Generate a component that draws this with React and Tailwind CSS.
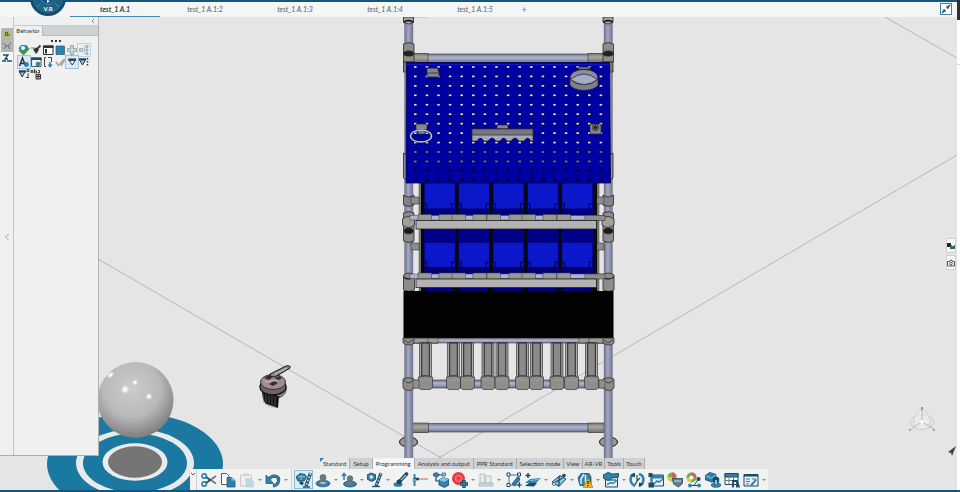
import { ChevronLeft } from 'lucide-react';

const documents = ['test_1 A.1', 'test_1 A.1:2', 'test_1 A.1:3', 'test_1 A.1:4', 'test_1 A.1:5'];

const sections = [
  { name: 'Standard' },
  { name: 'Setup' },
  { name: 'Programming' },
  { name: 'Analysis and output' },
  { name: 'PPR Standard' },
  { name: 'Selection mode' },
  { name: 'View', tight: true },
  { name: 'AR-VR', tight: true },
  { name: 'Tools', tight: true },
  { name: 'Touch', tight: true },
];

const N = '#1b4a66';
const B = '#2f82ab';
const L = '#8fc4de';
const G = '#6f7a80';

const glyphs = {
  cut: (
    <g fill="none">
      <path d="M5 5 15 11.500M5 11 15 4" stroke={G} strokeWidth="1.800" />
      <circle cx="3.200" cy="4" r="2.200" stroke={B} strokeWidth="1.700" />
      <circle cx="3.200" cy="12" r="2.200" stroke={B} strokeWidth="1.700" />
      <path d="M5 5 9 8 5 11" stroke={N} strokeWidth="1.500" />
    </g>
  ),
  copy: (
    <g>
      <path d="M1.500 1.500h5l2.500 2.500v8.500h-7.500z" fill="#fff" stroke="#555d62" />
      <path d="M7 5.500h4.500l3.500 3v6.500H7z" fill={B} stroke={N} strokeWidth=".7" />
      <path d="M11.500 5.500v3h3.500z" fill={L} />
    </g>
  ),
  paste: (
    <g opacity=".55">
      <path d="M1.500 3h11v11h-11z" fill="#eee" stroke="#aaa" />
      <path d="M4 1.500h6v2.500H4z" fill="#bbb" />
      <path d="M7 6.500h4.500l3 2.500v6H7z" fill={L} stroke="#9ab" strokeWidth=".5" />
    </g>
  ),
  undo: (
    <g>
      <path d="M4 7C8 2 14.500 4 13.500 9 13 11.500 11 13.500 8 14" fill="none" stroke={N} strokeWidth="3.200" />
      <path d="M1 3v8.500h7.500z" fill={B} stroke={N} strokeWidth=".7" />
      <path d="M4 7C8 2 14.500 4 13.500 9 13 11.500 11 13.500 8 14" fill="none" stroke={B} strokeWidth="2.200" />
    </g>
  ),
  robotArm: (
    <g>
      <path d="M0 5 4 1.500 9 2.500 10.500 5 8 9 2 9z" fill={B} stroke={N} strokeWidth=".9" />
      <path d="M2 5 5 4 9 5M5 4v4" stroke={L} fill="none" />
      <path d="m5 9 3 2-2 2.500-3-2.500z" fill={N} />
      <path d="M14.500 1 10 14" stroke={N} strokeWidth="3.400" />
      <path d="M14.500 1 10 14" stroke="#c9d3d8" strokeWidth="1.600" strokeDasharray="2 1.500" />
      <path d="M7 15h7" stroke={N} strokeWidth="1.500" />
    </g>
  ),
  device: (
    <g>
      <ellipse cx="8" cy="11.500" rx="7" ry="3.300" fill={B} stroke={N} strokeWidth=".7" />
      <path d="M5 8v3c1 1.500 5 1.500 6 0V8z" fill={G} />
      <circle cx="8" cy="5.500" r="3" fill={G} stroke="#4d565b" strokeWidth=".6" />
      <ellipse cx="8" cy="11" rx="3" ry="1" fill="#b9c3c8" />
    </g>
  ),
  deviceUp: (
    <g>
      <ellipse cx="9" cy="12" rx="6.500" ry="3" fill={B} stroke={N} strokeWidth=".7" />
      <path d="M6.500 8v3.500c1 1.300 4 1.300 5 0V8z" fill={G} />
      <circle cx="9" cy="6.500" r="2.800" fill={G} stroke="#4d565b" strokeWidth=".6" />
      <path d="M3 8V2M1 4l2-2.500L5 4" stroke={B} fill="none" strokeWidth="1.500" />
    </g>
  ),
  armGear: (
    <g>
      <path d="m0 3 4-2 4.500 1.500V7.500L4.500 9.500 0 7z" fill={B} stroke={N} strokeWidth=".9" />
      <circle cx="4.300" cy="5" r="1.700" fill="#dfeef5" />
      <path d="M14 1 9 14" stroke={N} strokeWidth="3.200" />
      <path d="M14 1 9 14" stroke={L} strokeWidth="1.500" strokeDasharray="2 1.500" />
      <path d="M5 14.500h8" stroke={N} strokeWidth="1.300" />
    </g>
  ),
  brush: (
    <g>
      <path d="M13.500 2 7 9" stroke={N} strokeWidth="3.600" strokeLinecap="round" />
      <path d="M13 3 8 8" stroke={L} strokeWidth="1.200" />
      <ellipse cx="5" cy="12.500" rx="4.500" ry="2.300" fill={B} />
      <circle cx="6" cy="10" r="2.500" fill={N} />
    </g>
  ),
  axis: (
    <g fill="none">
      <path d="M2.500 2v12" stroke={B} strokeWidth="2" />
      <path d="M2 7h5" stroke={N} strokeWidth="2.500" />
      <path d="M7 7h9" stroke="#d0585a" strokeWidth="1" />
      <circle cx="2.500" cy="8" r="1.600" fill={L} stroke={N} strokeWidth=".5" />
    </g>
  ),
  boxes: (
    <g>
      <path d="m0 2 3.500-1.500 3 2-2 2.500-4-1z" fill={B} stroke={N} strokeWidth=".7" />
      <path d="M3 5v4h4M6 3h4" stroke={N} fill="none" strokeWidth="1.200" />
      <path d="m6 8 4-2.500 6 2V13l-4.500 2.500L6 13z" fill={B} stroke={N} strokeWidth=".8" />
      <path d="m6 8 5 2 4.500-2.500-5.500-2z" fill={L} />
      <path d="M9 1h3.500v3H9z" fill={L} stroke={N} strokeWidth=".6" />
    </g>
  ),
  record: (
    <g>
      <circle cx="6.500" cy="6.500" r="6.500" fill="#e23f45" />
      <circle cx="6.500" cy="6.500" r="3" fill="none" stroke="#f59a9b" />
      <path d="M8 12h8M12 8v8" stroke={N} strokeWidth="3.400" />
      <path d="M8.500 12h7M12 8.500v7" stroke={B} strokeWidth="1.500" />
    </g>
  ),
  stamp: (
    <g opacity=".5" fill="#dde3e6" stroke={G} strokeWidth=".8">
      <path d="M2 2h5v9H2zM7 4h6v7H7z" />
      <path d="M1 11h14v3H1z" fill={L} />
    </g>
  ),
  frame: (
    <g>
      <path d="M3 3h10v10H3z" fill="none" stroke={B} />
      <path d="M1 1h3v3H1zM11.500 1h3v3h-3zM1 11.500h3v3H1z" fill="#fff" stroke={N} />
      <path d="m6 12 5.500-7 2.500 2-5.500 7z" fill={B} stroke={N} strokeWidth=".8" />
      <path d="M11 13h5M13.500 10.500v5" stroke={N} strokeWidth="1.200" />
    </g>
  ),
  planes: (
    <g>
      <path d="M3 1v5M.5 3.500h5" stroke={N} strokeWidth="1.500" />
      <path d="m0 11 5-4 11-1-5 5z" fill={B} />
      <path d="m0 14 4-3h8l-3 3.500z" fill={N} />
      <path d="m5 8.500 9-1" stroke={L} />
    </g>
  ),
  path: (
    <g>
      <path d="m1 10 8-6.500 6 3.500-7 7.500z" fill={L} stroke={N} />
      <path d="m4.500 10 7-4M8 4v10" stroke={N} fill="none" strokeWidth="1.300" />
      <circle cx="13" cy="3.500" r="1.800" fill={N} />
      <circle cx="3" cy="12" r="1.500" fill="#fff" stroke={N} strokeWidth=".8" />
    </g>
  ),
  warning: (
    <g>
      <path d="M4 1.500h8l2 3.500v8.500H3L1 6z" fill={B} stroke={N} strokeWidth=".8" />
      <path d="M7 2 4 7v5M8.500 3v9" stroke="#e3f1f7" strokeWidth="1.500" fill="none" />
      <path d="m11 6 5 9.500H6z" fill="#f5b21e" stroke="#a97208" strokeWidth=".6" />
      <path d="M11 9v3M11 13v1.300" stroke="#3a2a00" strokeWidth="1.300" />
    </g>
  ),
  program: (
    <g>
      <path d="M2.500 5.500h12v9.500h-12z" fill="#e5eff4" stroke={N} />
      <path d="M4 8h9M4 12.500l4-2 2 1 4-3" stroke={B} fill="none" strokeWidth="1.400" />
      <path d="m0 3 5-2.500L9.500 2l6-.5v3.500L9.500 6 5 8.500 0 6z" fill={B} stroke={N} strokeWidth=".9" />
    </g>
  ),
  clock: (
    <g fill="none">
      <path d="M6 2C2 3 1 6 2 10c1 2 2 3 4 4M10 2c4 1 5 4 4 8-1 2-2 3-4 4" stroke={B} strokeWidth="2.600" />
      <path d="M8 3v6l-2 4M8 9l3-3" stroke={N} strokeWidth="1.200" />
      <path d="m1 3 5-2v4.500zM15 12l-5 3v-4.500z" fill={N} />
    </g>
  ),
  tasks: (
    <g>
      <path d="M4 3h11.500v11H4z" fill="#e5eff4" stroke={N} />
      <path d="M4 3h11.500v3.500H4z" fill={B} />
      <path d="M.5 1h4v4h-4zM.5 10.500H6v5H.5z" fill={N} />
      <path d="M3 5v5M6 12l3-3 2 1 4-3" stroke={B} fill="none" strokeWidth="1.500" />
    </g>
  ),
  shield: (
    <g>
      <circle cx="5" cy="5" r="4.500" fill="#69b54a" />
      <path d="M5 5V.5A4.500 4.500 0 0 1 9.500 5z" fill="#e2574c" />
      <path d="M.5 5H5v4.500A4.500 4.500 0 0 1 .5 5z" fill="#f0c33c" />
      <path d="M5.500 6.500h10v5l-4 3.500-5-3z" fill={G} stroke={N} strokeWidth=".8" />
      <path d="M7 9h7" stroke={L} strokeWidth="1.500" />
    </g>
  ),
  branch: (
    <g>
      <circle cx="5.500" cy="5.500" r="5" fill="#69b54a" />
      <path d="M5.500 5.500V.5a5 5 0 0 1 5 5z" fill="#e2574c" />
      <path d="M.5 5.500h5v5a5 5 0 0 1-5-5z" fill="#f0c33c" />
      <circle cx="5.500" cy="5.500" r="2" fill="#fff" />
      <path d="M4 13.500h4l4-6M8 13.500h5" stroke={N} fill="none" />
      <circle cx="4" cy="13.500" r="2" fill={B} />
      <circle cx="12.500" cy="7" r="2" fill={N} />
      <circle cx="13" cy="13.500" r="2" fill={B} />
    </g>
  ),
  simulate: (
    <g>
      <path d="m0 4 4.500-3.500L11 2.500v5L6.500 10 0 7.500z" fill={B} stroke={N} strokeWidth=".9" />
      <path d="m1 4 5.500 2L11 3" stroke={L} fill="none" />
      <circle cx="11" cy="8" r="3.300" fill={N} />
      <ellipse cx="11" cy="13" rx="4.800" ry="2.300" fill={B} stroke={N} strokeWidth=".6" />
      <path d="M10 8h2v4h-2z" fill={L} />
    </g>
  ),
  table: (
    <g>
      <path d="M1 1.500h13v11H1z" fill="#fff" stroke={N} />
      <path d="M1 1.500h13v3.500H1z" fill={B} stroke={N} />
      <path d="M1 8.500h13M5 4v8.500M9.500 4v8.500" stroke={G} />
      <path d="M9 15.500V9h4v6.500M13 10l2.500 5.500" stroke={N} strokeWidth="1.800" fill="none" />
    </g>
  ),
  report: (
    <g>
      <path d="M1 2.500h14v11.500H1z" fill="#e8f0f4" stroke={N} />
      <path d="M1 2.500h14v2H1z" fill={N} />
      <path d="M3 7h4M3 9.500h4M3 12h3M9 7h4" stroke={B} />
      <path d="m7 13 5.500-6 1.500 1-5 6z" fill={B} />
    </g>
  ),
};

const toolGroups = [
  [
    { id: 'cut', label: 'Cut' },
    { id: 'copy', label: 'Copy' },
    { id: 'paste', label: 'Paste', menu: true },
    { id: 'undo', label: 'Undo', menu: true },
  ],
  [
    { id: 'robotArm', label: 'Robot', selected: true },
    { id: 'device', label: 'Device', menu: true },
    { id: 'deviceUp', label: 'Mount', menu: true },
    { id: 'armGear', label: 'Mechanism', menu: true },
    { id: 'brush', label: 'Jog' },
    { id: 'axis', label: 'Axis' },
  ],
  [
    { id: 'boxes', label: 'Assembly' },
    { id: 'record', label: 'Record', menu: true },
    { id: 'stamp', label: 'Stamp', menu: true },
  ],
  [
    { id: 'frame', label: 'Frame' },
    { id: 'planes', label: 'Planes', menu: true },
    { id: 'path', label: 'Path', menu: true },
    { id: 'warning', label: 'Check', menu: true },
    { id: 'program', label: 'Program', menu: true },
    { id: 'clock', label: 'Cycle time' },
    { id: 'tasks', label: 'Tasks' },
    { id: 'shield', label: 'Safety' },
    { id: 'branch', label: 'Branch' },
    { id: 'simulate', label: 'Simulate' },
    { id: 'table', label: 'Table' },
    { id: 'report', label: 'Report', menu: true },
  ],
];

// Icons of the Behavior panel, on a 12 unit grid
const behaviorTools = [
  { label: 'Validate', art: <g><path d="m.5 4 3-3 5 0 2 3-4 6-5-4z" fill={B} /><circle cx="5" cy="4" r="2" fill="#fff" /><path d="M1.500 6 5.500 10 11 4" fill="none" stroke="#3f9e2f" strokeWidth="2.200" /></g> },
  { label: 'Clean', art: <g><path d="M10.500 1.500 7 5" stroke="#444" strokeWidth="2.200" /><path d="m3 5 4-1.500L9 6 6 10z" fill="#333" /><path d="M1 4h4" stroke={G} /></g> },
  { label: 'Window', art: <g><path d="M1.500 2h9.500v8.500h-9.500z" fill="#fff" stroke="#333" /><path d="M1 1.500h10.500V4H1z" fill="#333" /><path d="M3 5h2v4.500H3z" fill="#333" /></g> },
  { label: 'Fill', art: <path d="M2 2h8.500v8.500H2z" fill={B} stroke={N} strokeWidth=".6" /> },
  { label: 'Add', art: <path d="M4.500 1.500h3v3h3v3h-3v3h-3v-3h-3v-3h3z" fill="#c4d2da" stroke="#8c9ca6" strokeWidth=".8" /> },
  { label: 'Tree', framed: true, art: <g stroke="#8ba4b3" fill="#c8d8e1" strokeWidth=".8"><path d="M1.500 4.500h3v3h-3zM8 1.500h2v2H8zM8 5h2v2H8zM8 8.500h2v2H8z" /><path d="M4.500 6H8M6.500 2.500v7M6.500 2.500H8M6.500 9.500H8" fill="none" strokeDasharray="1 .6" /></g> },
  { label: 'Text', selected: true, art: <g fill="none"><path d="m1.500 10 3-8 3 8M2.500 7.500h4" stroke="#333" strokeWidth="1.500" /><circle cx="8.500" cy="8.500" r="2.400" fill={B} /></g> },
  { label: 'Dialog', art: <g><path d="M1.500 2h9.500v8.500h-9.500z" fill="#e9eff2" stroke="#4c5a62" /><path d="M1 1.500h10.500V4H1z" fill={N} /><circle cx="8" cy="8" r="2.300" fill={B} /></g> },
  { label: 'Bracket', art: <g fill="none" stroke="#444"><path d="M4 1.500H2.500v9H4M6 1.500h3.500V6" /><path d="M8 6v4M6.500 8.500 8 10.500l2-2" stroke={B} strokeWidth="1.500" /></g> },
  { label: 'Apply', art: <g stroke="#a4a9ac" fill="none" strokeWidth="1.600"><path d="m2 6 2.500 3.500L10.500 3" /><path d="m6 7 1.500 2 3-5" /></g> },
  { label: 'Filter', selected: true, art: <g><path d="M2.500 3h7.500L6.200 9z" fill="#fff" stroke="#333" /><path d="M2.500 3H10v2H2.500z" fill={N} /></g> },
  { label: 'Filter list', art: <g><path d="M1 3h7L4.500 9z" fill={L} stroke="#333" /><path d="M1 2.500h7v2H1z" fill={N} /><path d="M9.500 2v8" stroke="#333" strokeWidth="1.500" strokeDasharray="1.500 1.500" /></g> },
  { label: 'Filter order', art: <g><path d="M1 3h6.500L4.200 9z" fill={L} stroke="#333" /><path d="M1 2.500h7v2H1z" fill={N} /><path d="M9 1.500h2v2H9zM10 5v5M8 9.500h3" fill="none" stroke="#333" strokeWidth=".9" /></g> },
  { label: 'Labels', art: <g stroke="#333" fill="none"><path d="M1 5V2.500h2V5M1 4h2M4.500 1v4h2V3h-2M9.500 5V2.500H8M9.500 5H8V4" strokeWidth=".9" /><path d="M6 6.500h4.500v4.500H6zM6 8.500h4.500M8.200 6.500V11" fill="#ccc" /></g> },
];

const holes = [];
for (let r = 0; r < 13; r++) {
  for (let c = 0; c < 17; c++) holes.push({ x: 415 + c * 11.6, y: 66.5 + r * 9.45, dim: r > 10, mid: r > 8 });
}
const bins = [0, 1, 2, 3, 4].map((i) => 421.7 + i * 34.4);
const rollers = [418, 439, 452, 473, 487, 509, 522, 543, 557];
const uprights = [418.5, 446.5, 460.5, 481, 495, 515.5, 529.5, 550, 564.5, 584.5];

function Post({ x }) {
  return (
    <g stroke="#26272b" strokeWidth=".8">
      <rect x={x} y="17" width="8.500" height="450" fill="url(#tubeV)" stroke="#777a86" strokeWidth=".4" />
      <path d={`M${x - 1} 17h10v5q-5 4-10 0z`} fill="#a3a29e" />
      <path d={`M${x - 1} 22.500q5-4 10 0`} fill="none" stroke="#111" strokeWidth="1.500" />
      <path d={`M${x - 1} 44q5-3 10.500 0v18h-10.500z`} fill="#8d8c88" />
      <ellipse cx={x + 4.2} cy="53.500" rx="5" ry="2.600" fill="#24231f" />
      <path d={`M${x - 1} 62h10v10h-10z`} fill="#777672" />
      <path d={`M${x - 1} 153q5 4 10 0v25q-5 4-10 0z`} fill="#8d8c90" />
      <path d={`M${x - 1} 195q5 4 10.500 0v10q-5 3-10.500 0z`} fill="#84838a" />
      <path d={`M${x - 1} 213q5-3 10.500 0v28q-5 3-10.500 0z`} fill="#8d8c88" />
      <path d={`M${x - 2} 219q6-5 12 0v6q-6 5-12 0z`} fill="#a09f9b" />
      <ellipse cx={x + 4.2} cy="231" rx="4.600" ry="2.800" fill="#1b1a18" />
      <path d={`M${x - 1} 275q5-4 11 0v15q-5 3-11 0z`} fill="#8d8c88" />
      <path d={`M${x - 1} 277q5 4 11 0`} fill="none" strokeWidth="1.500" />
    </g>
  );
}

function Shelf({ y, railY }) {
  return (
    <g>
      {bins.map((x) => (
        <g key={x}>
          <rect x={x} y={y} width="34.400" height={railY - y} fill="#00007c" />
          <rect x={x + 3} y={y} width="30" height={railY - y - 12} fill="#0b17ca" />
          <path d={`M${x + 3} ${railY - 17}h2v6h25v-6h3`} fill="none" stroke="#000034" strokeWidth="1" />
          <rect x={x - 0.6} y={y} width="3" height={railY - y} fill="#07070f" />
        </g>
      ))}
      <rect x="594" y={y} width="3" height={railY - y} fill="#0a0a10" />
      <rect x="410" y={railY - 5} width="194" height="4.500" fill="#aeb3cf" stroke="#44454b" strokeWidth=".5" />
      {rollers.map((x) => (
        <rect key={x} x={x} y={railY - 6} width="13.500" height="6" fill="#999893" stroke="#3a3a38" strokeWidth=".5" />
      ))}
      <rect x="585" y={railY - 5} width="20" height="5" fill="#8e8d89" stroke="#333" strokeWidth=".5" />
      <path d={`M411 ${y + 14}h8v7h-8zM597 ${y + 14}h7v7h-7z`} fill="#8e8d89" stroke="#333" strokeWidth=".6" />
      <rect x="416" y={railY} width="180.500" height="8.500" fill="#b3b3b3" stroke="#252525" strokeWidth=".8" />
    </g>
  );
}

function Scene() {
  return (
    <svg className="absolute inset-0 h-full w-full" viewBox="0 17 957 473" preserveAspectRatio="xMidYMid slice">
      <defs>
        <linearGradient id="tubeV">
          <stop offset="0" stopColor="#6e7390" />
          <stop offset=".45" stopColor="#a2a8c2" />
          <stop offset="1" stopColor="#70748c" />
        </linearGradient>
        <linearGradient id="tubeH" x2="0" y2="1">
          <stop offset="0" stopColor="#737895" />
          <stop offset=".45" stopColor="#b0b5d0" />
          <stop offset="1" stopColor="#70748c" />
        </linearGradient>
        <linearGradient id="joint" x2="0" y2="1">
          <stop offset="0" stopColor="#77756f" />
          <stop offset=".4" stopColor="#aaa8a2" />
          <stop offset="1" stopColor="#71706b" />
        </linearGradient>
        <radialGradient id="ball" cx=".45" cy=".35" r=".68">
          <stop offset="0" stopColor="#cccccc" />
          <stop offset=".55" stopColor="#b9b9b9" />
          <stop offset="1" stopColor="#777" />
        </radialGradient>
        <radialGradient id="spot">
          <stop offset=".2" stopColor="#fff" />
          <stop offset="1" stopColor="#fff" stopOpacity="0" />
        </radialGradient>
      </defs>

      {/* Floor lines */}
      <path d="M98 259 443 459M437 459 957 155M885 17l72 41" fill="none" stroke="#a9a9a9" strokeWidth=".8" />

      {/* Turntable */}
      <ellipse cx="135" cy="464" rx="88" ry="51" fill="#1a78a1" />
      <ellipse cx="135" cy="463" rx="59" ry="34" fill="#e8e9e9" />
      <ellipse cx="135" cy="463" rx="52" ry="29.500" fill="#1a78a1" />
      <ellipse cx="135" cy="462" rx="32.500" ry="18.700" fill="#ebebeb" />
      <ellipse cx="135" cy="462" rx="27" ry="15.700" fill="#757575" />
      <circle cx="135.500" cy="400" r="38" fill="url(#ball)" />
      <circle cx="125" cy="389.500" r="4.500" fill="url(#spot)" />
      <circle cx="135" cy="382.500" r="3" fill="url(#spot)" />
      <circle cx="149" cy="396.500" r="3.500" fill="url(#spot)" />
      <ellipse cx="110.500" cy="375" rx="4.500" ry="3" fill="url(#spot)" transform="rotate(-45 110.500 375)" />

      {/* Gripper */}
      <path d="M262 390q0 10 4 14l12 4 1-12z" fill="#111" />
      <path d="m263 393 1 10M266 393v12M269 395v12M272 395v13M275 396v12" stroke="#777" strokeWidth=".6" />
      <path d="M279 398q9-4 7-12l-6 6z" fill="#888" stroke="#222" strokeWidth=".6" />
      <ellipse cx="273" cy="387" rx="13" ry="8" fill="#6f6262" stroke="#111" strokeWidth="1.300" />
      <ellipse cx="273" cy="382" rx="12.500" ry="7.500" fill="#a48d8d" stroke="#333" />
      <path d="m264 378 5-3 4 2-4 3zM269 384l5-3 4 2-5 3zM275 378l4-2 3 2-4 3z" fill="#332e2e" />
      <path d="m265 382 14-2" stroke="#cbbaba" />
      <path d="m270 374 16-8q5-1 4 2l-15 9q-5 0-5-3z" fill="#8a8888" stroke="#151515" />
      <path d="m275 374 12-6" stroke="#c4c4c4" />

      {/* Rack frame */}
      <g stroke="#333" strokeWidth=".6">
        <path d="M404 17h24" stroke="#999" />
        <ellipse cx="408.500" cy="442" rx="9" ry="5" fill="#999995" stroke="#111" strokeWidth="1" />
        <ellipse cx="608.500" cy="442" rx="9" ry="5" fill="#999995" stroke="#111" strokeWidth="1" />
        <rect x="410" y="54" width="194" height="8.500" fill="url(#tubeH)" />
        <rect x="410" y="53.500" width="18" height="9" fill="url(#joint)" />
        <rect x="588" y="53.500" width="18" height="9" fill="url(#joint)" />
        <rect x="412" y="423.500" width="192" height="8.500" fill="url(#tubeH)" />
        <rect x="412" y="423" width="16.500" height="9.500" fill="url(#joint)" />
        <rect x="588" y="423" width="16" height="9.500" fill="url(#joint)" />
        <rect x="412" y="380" width="192" height="8" fill="url(#tubeH)" />
      </g>
      <Post x={404.5} />
      <Post x={604} />

      {/* Shelves with bins */}
      <rect x="419" y="183" width="178" height="108" fill="#07070f" />
      <path d="M419 183h2v108h-2zM597 183h2v108h-2z" fill="#888782" stroke="#222" strokeWidth=".4" />
      <Shelf y={183} railY={220.5} />
      <Shelf y={229} railY={279} />
      {bins.map((x) => (
        <g key={x}>
          <rect x={x + 3} y="229.500" width="30" height="13.500" fill="#000086" />
          <rect x={x + 3} y="288" width="29" height="3" fill="#000080" />
        </g>
      ))}

      {/* Perforated board */}
      <path d="M406.500 62.500h203l1 120.500H406z" fill="#0000a2" stroke="#000052" strokeWidth=".8" />
      <path d="M407 64.500h202" stroke="#1014d0" strokeWidth="1.500" />
      {holes.map((h) => (
        <g key={`${h.x}-${h.y}`}>
          <rect x={h.x - 1.6} y={h.y - 1.2} width="3.600" height="2.800" fill="#00003c" />
          {!h.dim && <rect x={h.x - 1} y={h.y - 0.4} width="2.600" height="1.700" fill={h.mid ? '#777bb0' : '#dedfec'} />}
        </g>
      ))}
      <g stroke="#26262c" strokeWidth=".7" fill="#85868f">
        <path d="M427 68h11v3l1 1v5h-12z" />
        <path d="M427 73h12M426 68h13" />
        <path d="M416 124h11v5l-2 2v3h-7v-3l-2-2z" />
        <ellipse cx="421" cy="136" rx="10.500" ry="6" fill="none" stroke="#17172b" strokeWidth="2.200" />
        <ellipse cx="421" cy="136" rx="10.500" ry="6" fill="none" stroke="#bfc4ec" strokeWidth="1.400" />
        <path d="M497 125h11v4h-11z" />
        <path d="M472 129h61v12h-2q-3-6-7 0h-5q-4-6-8 0h-4q-3-6-7 0h-4q-4-6-8 0h-4q-4-6-7 0h-5z" fill="#a5a7bc" />
        <path d="M472 129h61v6h-61z" fill="#77777d" />
        <path d="M590 124h11v10h-11z" />
        <circle cx="595.500" cy="127.500" r="3" fill="#777" stroke="#111" />
        <circle cx="595.500" cy="127.500" r="1.300" fill="#111" />
        <path d="M570 77v8c4 7 24 7 28 0v-8z" fill="#7e808b" />
        <ellipse cx="584" cy="77" rx="13.700" ry="7.500" fill="#8c8d98" />
        <path d="M570.500 79.500q13-11 27 0-13 10-27 0z" fill="#a5abc9" stroke="#111" />
        <path d="M578 67h12v2h-12z" />
      </g>
      <path d="M420 73h2M419 170h2M597 174h2" stroke="#000030" strokeWidth="1.500" />

      {/* Lower part */}
      <rect x="403.500" y="291" width="210" height="47" fill="#020202" />
      <rect x="410" y="338.500" width="194" height="4.500" fill="url(#tubeH)" stroke="#333" strokeWidth=".5" />
      <rect x="410" y="338" width="28" height="5.500" fill="url(#joint)" stroke="#333" strokeWidth=".5" />
      <rect x="579" y="338" width="26" height="5.500" fill="url(#joint)" stroke="#333" strokeWidth=".5" />
      <path d="M428 338v5M589 338v5" stroke="#333" strokeWidth=".6" />
      {uprights.map((x) => (
        <g key={x} stroke="#24242a" strokeWidth=".6">
          <rect x={x + 1} y="343" width="12" height="35" fill="#a9a9a6" />
          <rect x={x + 3.2} y="343" width="7.600" height="33" fill="#8b8b8b" strokeWidth="1" />
          <path d={`M${x} 377q7-2 14 0v10l-2 2.500h-10l-2-2.500z`} fill="#8f8e8a" />
          <path d={`M${x + 1} 380h12`} stroke="#a7a6a1" />
        </g>
      ))}
      {[403, 603].map((x) => (
        <g key={x} stroke="#222" strokeWidth=".7" fill="#8d8c88">
          <path d={`M${x} 338h11v5q-5 4-11 0z`} />
          <path d={`M${x} 379q5-3 11 0v9q-5 5-11 0z`} />
          <path d={`M${x + 1} 380q5 6 9 0M${x + 1} 340l4 3 5-3`} fill="none" />
        </g>
      ))}
      <path d="M413 380h6v8h-6zM599 380h6v8h-6z" fill="#92918c" stroke="#333" strokeWidth=".5" />

      {/* Orientation tripod */}
      <g fill="none" stroke="#cfcfcf">
        <ellipse cx="922" cy="422" rx="12" ry="7" />
        <path d="M922 409c-8 5-10 13-7 19 4 2 10 2 14 0 3-6 1-14-7-19z" fill="#f0f0f0" fillOpacity=".5" />
        <path d="M922 422v-12M922 422l-11 7M922 422l12 7" stroke="#b8b8b8" />
        <path d="M922 407v3M909 430h2M933 430h2" stroke="#666" strokeWidth="1.200" />
        <circle cx="922" cy="422" r="1.800" fill="#fff" stroke="none" />
      </g>
      <path d="m956 446-8 6 3 1 1 3z" fill="#444" />
    </svg>
  );
}

function Compass() {
  return (
    <svg className="absolute -top-0.5 left-[30px] z-20 h-[17px] w-9" viewBox="0 0 36 17" aria-hidden="true">
      <circle cx="18" cy="-2" r="18" fill="#124d6f" />
      <circle cx="18" cy="-2" r="14.500" fill="#1a6085" stroke="#3584a8" strokeWidth=".6" />
      <circle cx="18" cy="-2" r="6.500" fill="#14557a" stroke="#5f9fbd" strokeWidth=".6" />
      <path d="m7 7 4-4M29 7l-4-4" stroke="#5f9fbd" strokeWidth=".7" />
      <path d="m17 0 3 1-3 2z" fill="#fff" />
      <text x="18" y="11" textAnchor="middle" fontSize="6" fontWeight="700" fill="#fff">V.R</text>
    </svg>
  );
}

function Header() {
  return (
    <header className="relative flex h-[17px] shrink-0 items-stretch border-t-2 border-[#14577a] bg-[#f3f5f7] pl-[70px] pr-[5px]">
      <Compass />
      <nav className="flex">
        {documents.map((name, i) => (
          <button
            key={name}
            className={`w-[90px] border-b text-[7px] leading-[14px] italic ${i === 0 ? 'border-[#3f8db5] font-bold text-[#3c3c3c]' : 'border-transparent text-[#5a5a5a]'}`}
          >
            {name}
          </button>
        ))}
        <button aria-label="New tab" className="w-2 text-[9px] leading-[13px] text-[#777]">+</button>
      </nav>
      <button aria-label="Restore" className="ml-auto mt-px flex h-3 w-3 items-center justify-center border border-[#3d84a8] bg-white">
        <svg className="h-2.5 w-2.5 shrink-0" viewBox="0 0 10 10" fill="#14476a">
          <path d="M5.500 4.500V1.500l1 1L8.500.5l1 1-2 2 1 1zM4.500 5.500v3l-1-1-2 2-1-1 2-2-1-1z" />
        </svg>
      </button>
    </header>
  );
}

function SidePanel() {
  return (
    <aside className="flex w-[99px] shrink-0 border-b border-r border-[#b0b0b0] bg-[#f0f0f0]">
      <div className="flex w-3.5 flex-col border-r border-[#c4c4c4] pt-[11px] pl-px">
        <button aria-label="Objects" className="flex h-3 items-center justify-center rounded-tl-xs bg-[#b4b5b5]">
          <svg className="h-2 w-2" viewBox="0 0 8 8"><path d="M4 0 8 4 4 8 0 4z" fill="#b7bf3c" /><path d="M2.500 2.500h2v3h-2zM5 4l1.500 2" fill="none" stroke="#444" strokeWidth=".8" /></svg>
        </button>
        <button aria-label="Relations" className="flex h-3 items-center justify-center bg-[#b4b5b5]">
          <svg className="h-2 w-2" viewBox="0 0 8 8"><path d="M0 1l3 3-2 3M8 1 5 4l2 3M2 4h4" fill="none" stroke="#6b7174" /></svg>
        </button>
        <button aria-label="Behavior" className="flex h-3 items-center justify-center bg-[#fbfbfb]">
          <svg className="h-2.5 w-2.5" viewBox="0 0 10 10"><path d="M1 2h5L3 6h3M5 8h5" fill="none" stroke={N} strokeWidth="1.300" /><path d="M0 7h4v2H0z" fill={B} /></svg>
        </button>
        <button aria-label="Collapse" className="mt-[165px] flex h-4 items-center">
          <ChevronLeft className="h-3 w-3 text-[#888]" strokeWidth={1.5} />
        </button>
      </div>
      <div className="flex-1">
        <div className="flex h-[9px] items-center justify-end border-b border-[#c9c9c9] pr-px">
          <button aria-label="Hide panel"><ChevronLeft className="h-2 w-2 text-[#555]" /></button>
        </div>
        <div className="flex h-2.5 border-b border-[#b9bcbd] bg-[#cdd1d2]">
          <button className="-mb-px w-[29px] border-r border-[#b8b8b8] bg-[#f0f0f0] text-[6px] leading-[10px] text-[#333]">Behavior</button>
        </div>
        <div className="flex h-2 items-end justify-center gap-0.5 pb-0.5">
          <i className="h-0.5 w-0.5 bg-[#333]" />
          <i className="h-0.5 w-0.5 bg-[#333]" />
          <i className="h-0.5 w-0.5 bg-[#333]" />
        </div>
        <div className="grid w-[76px] grid-cols-6 pl-1">
          {behaviorTools.map((t) => (
            <button
              key={t.label}
              aria-label={t.label}
              className={`h-3 w-3 ${t.selected ? 'bg-[#d8eaf5] outline outline-[#9cc3da]' : ''} ${t.framed ? 'outline outline-[#bcd3e0]' : ''}`}
            >
              <svg className="h-3 w-3" viewBox="0 0 12 12">{t.art}</svg>
            </button>
          ))}
        </div>
      </div>
    </aside>
  );
}

function ActionBar() {
  return (
    <div className="relative flex h-[34px] shrink-0 flex-col justify-end pl-[190px]">
      <nav className="flex h-[11px] pl-[130px]">
        {sections.map(({ name, tight }) => (
          <button
            key={name}
            className={`relative border-r border-[#a9adb0] text-[6px] leading-[11px] whitespace-nowrap text-[#333] ${tight ? 'px-0.5' : 'px-[3px]'} ${name === 'Programming' ? 'bg-[#f6f6f6]' : name === 'Standard' ? 'bg-[#e6e8e9]' : 'bg-[#cfd2d4]'}`}
          >
            {name === 'Standard' && <i className="absolute top-0 left-0 border-t-4 border-r-4 border-t-[#2f82ab] border-r-transparent" />}
            {name}
          </button>
        ))}
      </nav>
      <div className="flex h-[21px] w-[578px] gap-0.5 bg-[#f1f2f2]">
        <button aria-label="Collapse bar" className="flex w-[7px] items-start justify-center border-r border-[#cfcfcf] pt-[3px]">
          <svg className="h-1 w-1 shrink-0" viewBox="0 0 4 4"><path d="m0 1 2 2 2-2" fill="none" stroke="#555" /></svg>
        </button>
        {toolGroups.map((group, g) => (
          <div key={group[0].id} className={`flex items-center ${g === 0 ? 'border-r border-[#cfcfcf] pr-0.5' : ''}`}>
            {group.map((tool) => (
              <div key={tool.id} className="flex items-center">
                <button
                  aria-label={tool.label}
                  className={`flex h-[19px] w-[19px] items-center justify-center ${tool.selected ? 'border border-[#8fb9d0] bg-[#dcebf4]' : ''}`}
                >
                  <svg className="h-4 w-4 shrink-0" viewBox="0 0 16 16">{glyphs[tool.id]}</svg>
                </button>
                {tool.menu && (
                  <button aria-label={`${tool.label} options`} className="flex h-4 w-[7px] items-center justify-center">
                    <i className="border-x-2 border-t-2 border-x-transparent border-t-[#888]" />
                  </button>
                )}
              </div>
            ))}
          </div>
        ))}
      </div>
    </div>
  );
}

function App() {
  return (
    <div className="flex h-screen flex-col overflow-hidden bg-white font-['Lato','Noto_Sans',sans-serif]">
      <div className="flex min-h-0 flex-1">
        <div className="flex min-w-0 flex-1 flex-col">
          <Header />
          <main className="relative flex min-h-0 flex-1 flex-col overflow-hidden bg-[#e5e5e5]">
            <Scene />
            <div className="relative flex min-h-0 flex-1">
              <SidePanel />
              <div className="ml-auto flex flex-col gap-0.5 pt-[221px] pr-px">
                <button aria-label="Views" className="flex h-[15px] w-2.5 items-center justify-center border border-[#d0d0d0] bg-[#f8f8f8]">
                  <svg className="h-2 w-2 shrink-0" viewBox="0 0 8 8"><path d="M0 1h4v4H0z" fill="#222" /><path d="M3 3h5v4H3z" fill="#2e6b70" /><path d="M5 2h2v2H5z" fill="#fff" /></svg>
                </button>
                <button aria-label="Capture" className="flex h-[15px] w-2.5 items-center justify-center border border-[#d0d0d0] bg-[#f8f8f8]">
                  <svg className="h-2 w-2 shrink-0" viewBox="0 0 8 8" fill="none" stroke="#444" strokeWidth=".9"><path d="M.5 2.500h2l.5-1.200h2l.5 1.200h2v4.500h-7z" /><circle cx="4" cy="4.600" r="1.300" /></svg>
                </button>
              </div>
            </div>
            <ActionBar />
          </main>
        </div>
        <div className="w-[3px] bg-white">
          <div className="h-5 bg-[#2d2f31]" />
          <div className="mt-11 h-px bg-[#dddddd]" />
        </div>
      </div>
      <div className="h-0.5 shrink-0 bg-[#14577a]" />
    </div>
  );
}

export default App;
